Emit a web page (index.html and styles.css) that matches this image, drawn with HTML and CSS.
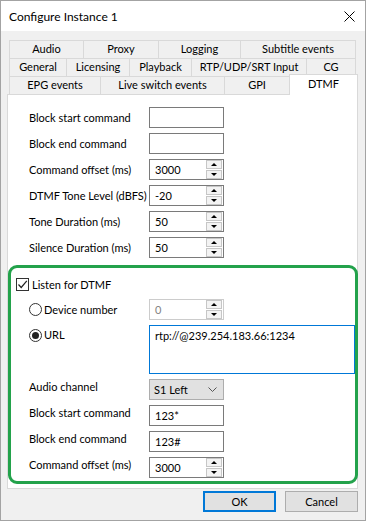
FILE: index.html
```html
<!DOCTYPE html>
<html>
<head>
<meta charset="utf-8">
<link rel="stylesheet" href="styles.css">
</head>
<body>
<div class="window">
  <div class="titlebar">
    <span class="title">Configure Instance 1</span>
    <svg class="close" width="11" height="11" viewBox="0 0 11 11"><path d="M0.5 0.5 L10.5 10.5 M10.5 0.5 L0.5 10.5" stroke="#000" stroke-width="1"/></svg>
  </div>
  <div class="body">
    <div class="tabs">
      <div class="tabrow r1">
        <div class="tab">Audio</div>
        <div class="tab">Proxy</div>
        <div class="tab">Logging</div>
        <div class="tab last">Subtitle events</div>
      </div>
      <div class="tabrow r2">
        <div class="tab">General</div>
        <div class="tab">Licensing</div>
        <div class="tab">Playback</div>
        <div class="tab">RTP/UDP/SRT Input</div>
        <div class="tab last">CG</div>
      </div>
      <div class="tabrow r3">
        <div class="tab">EPG events</div>
        <div class="tab">Live switch events</div>
        <div class="tab">GPI</div>
        <div class="tab last sel">DTMF</div>
      </div>
    </div>
    <div class="panel">
      <div class="form">
        <div class="row"><span class="label">Block start command</span><div class="text"></div></div>
        <div class="row"><span class="label">Block end command</span><div class="text"></div></div>
        <div class="row"><span class="label">Command offset (ms)</span><div class="spin"><span class="val">3000</span><div class="btns"><div class="sb up"></div><div class="sb down"></div></div></div></div>
        <div class="row"><span class="label">DTMF Tone Level (dBFS)</span><div class="spin"><span class="val">-20</span><div class="btns"><div class="sb up"></div><div class="sb down"></div></div></div></div>
        <div class="row"><span class="label">Tone Duration (ms)</span><div class="spin"><span class="val">50</span><div class="btns"><div class="sb up"></div><div class="sb down"></div></div></div></div>
        <div class="row"><span class="label">Silence Duration (ms)</span><div class="spin"><span class="val">50</span><div class="btns"><div class="sb up"></div><div class="sb down"></div></div></div></div>
      </div>
      <div class="group">
        <div class="chkrow"><span class="checkbox"><svg width="11" height="11" viewBox="0 0 11 11"><path d="M1.5 5.5 L4.2 8.5 L9.8 1.8" fill="none" stroke="#222" stroke-width="1.2"/></svg></span><span>Listen for DTMF</span></div>
        <div class="row"><span class="label radiolabel"><span class="radio"></span>Device number</span><div class="spin disabled"><span class="val">0</span><div class="btns"><div class="sb up"></div><div class="sb down"></div></div></div></div>
        <div class="row toprow urlrow"><span class="label radiolabel"><span class="radio on"></span>URL</span><div class="textarea">rtp://@239.254.183.66:1234</div></div>
        <div class="row toprow"><span class="label">Audio channel</span><div class="select"><span>S1 Left</span><svg width="9" height="6" viewBox="0 0 9 6"><path d="M0.5 0.5 L4.5 4.5 L8.5 0.5" fill="none" stroke="#555" stroke-width="1"/></svg></div></div>
        <div class="row toprow"><span class="label">Block start command</span><div class="text"><span class="val">123*</span></div></div>
        <div class="row toprow"><span class="label">Block end command</span><div class="text"><span class="val">123#</span></div></div>
        <div class="row toprow"><span class="label">Command offset (ms)</span><div class="spin"><span class="val">3000</span><div class="btns"><div class="sb up"></div><div class="sb down"></div></div></div></div>
      </div>
    </div>
    <div class="buttons">
      <div class="btn ok">OK</div>
      <div class="btn">Cancel</div>
    </div>
  </div>
</div>
</body>
</html>
```
FILE: styles.css
```css
* { box-sizing: border-box; }
html, body { margin: 0; padding: 0; }
body {
  font-family: Lato, "Liberation Sans", sans-serif;
  font-size: 11px;
  color: #000;
  background: #f0f0f0;
}
.window {
  width: 366px;
  height: 521px;
  border: 1px solid #a3a3a3;
  background: #f0f0f0;
  display: flex;
  flex-direction: column;
}
.titlebar {
  height: 30px;
  background: #fff;
  display: flex;
  align-items: center;
  justify-content: space-between;
  padding: 0 10px 0 8px;
  flex: none;
}
.title { font-size: 12px; }
.close { display: block; }
.body {
  flex: 1;
  padding: 9px 7px 0 6px;
}
.tabs { margin-left: 2px; }
.tabrow { display: grid; height: 18px; }
.r1 { grid-template-columns: 74px 75px 82px 116px; }
.r2 { grid-template-columns: 57px 63px 62px 115px 50px; }
.r3 { grid-template-columns: 91px 124px 65px 69px; }
.tab {
  height: 18px;
  border-top: 1px solid #d9d9d9;
  border-left: 1px solid #d9d9d9;
  background: #f0f0f0;
  text-align: center;
  line-height: 16px;
  white-space: nowrap;
}
.tab.last { border-right: 1px solid #d9d9d9; }
.tab.sel {
  background: #fff;
  height: 21px;
  margin-top: -2px;
  position: relative;
  z-index: 1;
  line-height: 18px;
}
.panel {
  width: 351px;
  height: 395px;
  border: 1px solid #d9d9d9;
  background: #fff;
  padding-top: 12px;
}
.form {
  padding-left: 21px;
  display: flex;
  flex-direction: column;
  gap: 5px;
}
.row {
  display: flex;
  align-items: center;
  height: 21px;
}
.row.toprow { align-items: flex-start; }
.label {
  width: 120px;
  flex: none;
  line-height: 16px;
  white-space: nowrap;
}
.text, .spin {
  width: 75px;
  height: 21px;
  border: 1px solid #7a7a7a;
  background: #fff;
  display: flex;
  align-items: center;
}
.val { padding-left: 5px; flex: 1; }
.btns {
  width: 17px;
  height: 19px;
  display: flex;
  flex-direction: column;
  justify-content: space-between;
  padding: 0 1px 0 0;
}
.sb {
  height: 9px;
  border: 1px solid #c6c6c6;
  background: #f3f3f3;
  display: flex;
  align-items: center;
  justify-content: center;
}
.sb::after {
  content: "";
  border-left: 3px solid transparent;
  border-right: 3px solid transparent;
}
.sb.up::after { border-bottom: 3px solid #000; }
.sb.down::after { border-top: 3px solid #000; }
.spin.disabled { border-color: #cccccc; }
.spin.disabled .val { color: #838383; }
.group {
  margin-top: 7px;
  margin-right: -1px;
  height: 219px;
  border: 3px solid #23a24b;
  border-radius: 9px;
  padding: 10px 0 0 18px;
  display: flex;
  flex-direction: column;
  gap: 5px;
}
.chkrow {
  display: flex;
  align-items: center;
  height: 13px;
  margin-left: -13px;
  margin-bottom: 3px;
}
.checkbox {
  width: 13px;
  height: 13px;
  border: 1px solid #333;
  background: #fff;
  margin-right: 3px;
  display: flex;
  align-items: center;
  justify-content: center;
}
.checkbox svg { display: block; }
.radiolabel { display: flex; align-items: center; }
.radio {
  width: 13px;
  height: 13px;
  border: 1px solid #333;
  border-radius: 50%;
  background: #fff;
  margin-right: 2px;
  display: flex;
  align-items: center;
  justify-content: center;
}
.radio.on::after {
  content: "";
  width: 7px;
  height: 7px;
  border-radius: 50%;
  background: #222;
}
.urlrow { height: 49px; }
.urlrow .label { padding-top: 2px; }
.textarea {
  width: 206px;
  height: 49px;
  border: 1px solid #0078d7;
  background: #fff;
  padding: 2px 5px;
  line-height: 16px;
}
.select {
  width: 75px;
  height: 21px;
  border: 1px solid #adadad;
  background: #e1e1e1;
  display: flex;
  align-items: center;
  justify-content: space-between;
  padding: 0 6px 0 4px;
}
.select svg { display: block; }
.buttons {
  display: flex;
  justify-content: flex-end;
  gap: 9px;
  margin-top: 2px;
}
.btn {
  width: 73px;
  height: 21px;
  border: 1px solid #adadad;
  background: #e1e1e1;
  text-align: center;
  line-height: 19px;
}
.btn.ok { border: 2px solid #0078d7; line-height: 17px; }
```
